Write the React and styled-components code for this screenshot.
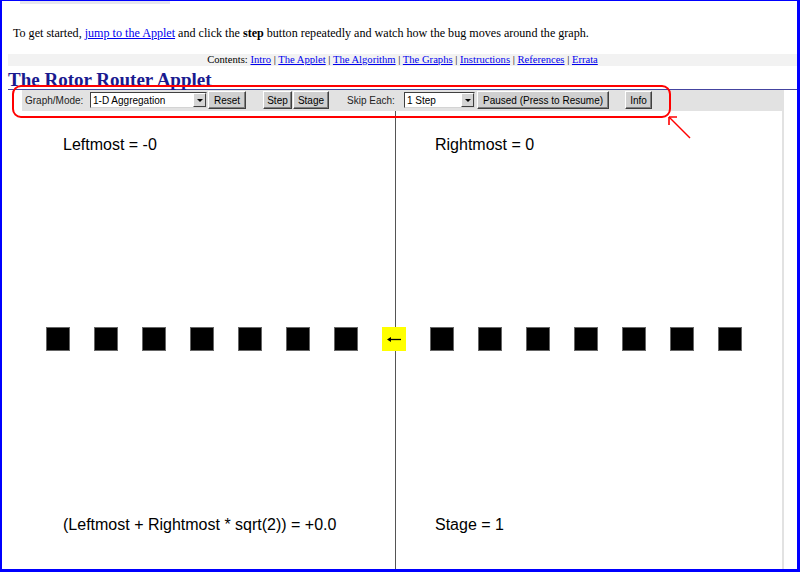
import React from 'react';
import styled, { createGlobalStyle } from 'styled-components';

const GlobalStyle = createGlobalStyle`
  html, body {
    margin: 0;
    padding: 0;
    background: #fff;
    overflow: hidden;
  }
`;

const sections = ['Intro', 'The Applet', 'The Algorithm', 'The Graphs', 'Instructions', 'References', 'Errata'];
const CELLS = 15;
const BUG = 7;

const App = () => (
  <>
    <GlobalStyle />
    <Frame>
      <ScrollStub />
      <Intro>
        To get started, <Link href="#applet">jump to the Applet</Link> and click the <b>step</b> button
        repeatedly and watch how the bug moves around the graph.
      </Intro>
      <ContentsBar>
        Contents:{' '}
        {sections.map((s, i) => (
          <React.Fragment key={s}>
            {i > 0 && ' | '}
            <Link href="#">{s}</Link>
          </React.Fragment>
        ))}
      </ContentsBar>
      <Title>The Rotor Router Applet</Title>

      <Applet id="applet">
        <Toolbar>
          <Label $w={68} $pl={3}>Graph/Mode:</Label>
          <Select $w={117}>
            <SelectText>1-D Aggregation</SelectText>
            <SelectArrow><Tri /></SelectArrow>
          </Select>
          <Button $w={38} $ml={1}>Reset</Button>
          <Button $w={29} $ml={17}>Step</Button>
          <Button $w={36} $ml={1}>Stage</Button>
          <Label $w={75} $pl={18}>Skip Each:</Label>
          <Select $w={71}>
            <SelectText>1 Step</SelectText>
            <SelectArrow><Tri /></SelectArrow>
          </Select>
          <Button $w={132} $ml={2}>Paused (Press to Resume)</Button>
          <Button $w={27} $ml={16}>Info</Button>
        </Toolbar>

        <Canvas>
          <Divider />
          <ReadoutRow $top={25}>
            <Readout>Leftmost = -0</Readout>
            <Readout>Rightmost = 0</Readout>
          </ReadoutRow>
          <Track>
            {Array.from({ length: CELLS }, (_, i) => (
              <Cell key={i} $bug={i === BUG}>
                {i === BUG && (
                  <svg width="14" height="7" viewBox="0 0 14 7">
                    <path d="M3 3.5 H14" stroke="#000" strokeWidth="1.3" />
                    <polygon points="0,3.5 4,1 4,6" fill="#000" />
                  </svg>
                )}
              </Cell>
            ))}
          </Track>
          <ReadoutRow $top={165}>
            <Readout>(Leftmost + Rightmost * sqrt(2)) = +0.0</Readout>
            <Readout>Stage = 1</Readout>
          </ReadoutRow>
        </Canvas>
      </Applet>

      <Markup width="800" height="572" viewBox="0 0 800 572">
        <rect x="13" y="86" width="657" height="31" rx="8" fill="none" stroke="#ff0000" strokeWidth="2" />
        <path d="M669 117 L690 138" stroke="#ff0000" strokeWidth="1.4" />
        <path d="M669 117 h8 M669 117 v8" stroke="#ff0000" strokeWidth="1.6" />
      </Markup>
    </Frame>
  </>
);

const Frame = styled.div`
  position: relative;
  display: flex;
  flex-direction: column;
  width: 800px;
  height: 572px;
  box-sizing: border-box;
  border: solid #0000ff;
  border-width: 1px 3px 3px 2px;
  overflow: hidden;
  background: #fff;
  font-family: "Liberation Serif", "Times New Roman", serif;
  color: #000;
`;

const ScrollStub = styled.div`
  flex: none;
  margin-left: 18px;
  width: 150px;
  height: 3px;
  background: #e6e6ee;
`;

const Intro = styled.p`
  margin: 22px 0 0 11px;
  font-size: 12.1px;
  line-height: 14px;
  white-space: nowrap;
`;

const Link = styled.a`
  color: #0000ee;
  text-decoration: underline;
`;

const ContentsBar = styled.div`
  flex: none;
  margin: 14px 0 0 6px;
  height: 12px;
  line-height: 12px;
  font-size: 10.6px;
  text-align: center;
  white-space: nowrap;
  background: #f2f2f2;
`;

const Title = styled.h1`
  flex: none;
  margin: 4px 0 0 6px;
  font-size: 19px;
  line-height: 19px;
  font-weight: bold;
  color: #1a1a8f;
  border-bottom: 1px solid #4444a0;
`;

const Applet = styled.div`
  flex: 1;
  min-height: 0;
  display: flex;
  flex-direction: column;
  margin-left: 20px;
  width: 760px;
  border-right: 2px solid #e2e2e2;
`;

const Toolbar = styled.div`
  flex: none;
  display: flex;
  align-items: flex-start;
  height: 21px;
  padding-top: 1px;
  box-sizing: border-box;
  background: #e2e2e2;
  font: 10px "Liberation Sans", Arial, sans-serif;
`;

const Label = styled.span`
  width: ${(p) => p.$w}px;
  padding: 1px 0 0 ${(p) => p.$pl}px;
  box-sizing: border-box;
  line-height: 18px;
  color: #222;
  white-space: nowrap;
`;

const Select = styled.div`
  display: flex;
  width: ${(p) => p.$w}px;
  height: 16px;
  margin-top: 1px;
  box-sizing: border-box;
  background: #fff;
  border: 1px solid;
  border-color: #404040 #d4d4d4 #d4d4d4 #404040;
`;

const SelectText = styled.span`
  flex: 1;
  padding: 1px 0 0 2px;
  line-height: 14px;
  white-space: nowrap;
`;

const SelectArrow = styled.span`
  display: flex;
  align-items: center;
  justify-content: center;
  width: 13px;
  height: 14px;
  box-sizing: border-box;
  background: #d4d4d4;
  border: 1px solid;
  border-color: #fff #404040 #404040 #fff;
`;

const Tri = styled.span`
  width: 0;
  height: 0;
  border-left: 3px solid transparent;
  border-right: 3px solid transparent;
  border-top: 3px solid #000;
`;

const Button = styled.button`
  width: ${(p) => p.$w}px;
  height: 18px;
  margin: 0 0 0 ${(p) => p.$ml}px;
  padding: 1px 0 0;
  box-sizing: border-box;
  font: 10px "Liberation Sans", Arial, sans-serif;
  color: #000;
  background: #d0d0d0;
  border: 1px solid;
  border-color: #fff #404040 #404040 #fff;
  box-shadow: inset -1px -1px #808080;
  white-space: nowrap;
`;

const Canvas = styled.div`
  position: relative;
  flex: 1;
  overflow: hidden;
  background: #fff;
  font: 16px "Liberation Sans", Arial, sans-serif;
  color: #000;
`;

const Divider = styled.div`
  position: absolute;
  left: 373px;
  top: 0;
  bottom: 0;
  width: 1px;
  background: #555;
`;

const ReadoutRow = styled.div`
  display: grid;
  grid-template-columns: 372px 1fr;
  margin-top: ${(p) => p.$top}px;
  line-height: 18px;
`;

const Readout = styled.div`
  padding-left: 41px;
  white-space: nowrap;
`;

const Track = styled.div`
  position: relative;
  z-index: 1;
  display: flex;
  gap: 24px;
  margin-top: 173px;
  padding-left: 24px;
`;

const Cell = styled.div`
  display: flex;
  align-items: center;
  justify-content: center;
  width: 24px;
  height: 24px;
  box-sizing: border-box;
  background: ${(p) => (p.$bug ? '#ffff00' : '#000')};
  border: 1px solid ${(p) => (p.$bug ? '#ffff00' : '#666')};
`;

const Markup = styled.svg`
  position: absolute;
  left: -2px;
  top: -1px;
  pointer-events: none;
`;

export default App;
